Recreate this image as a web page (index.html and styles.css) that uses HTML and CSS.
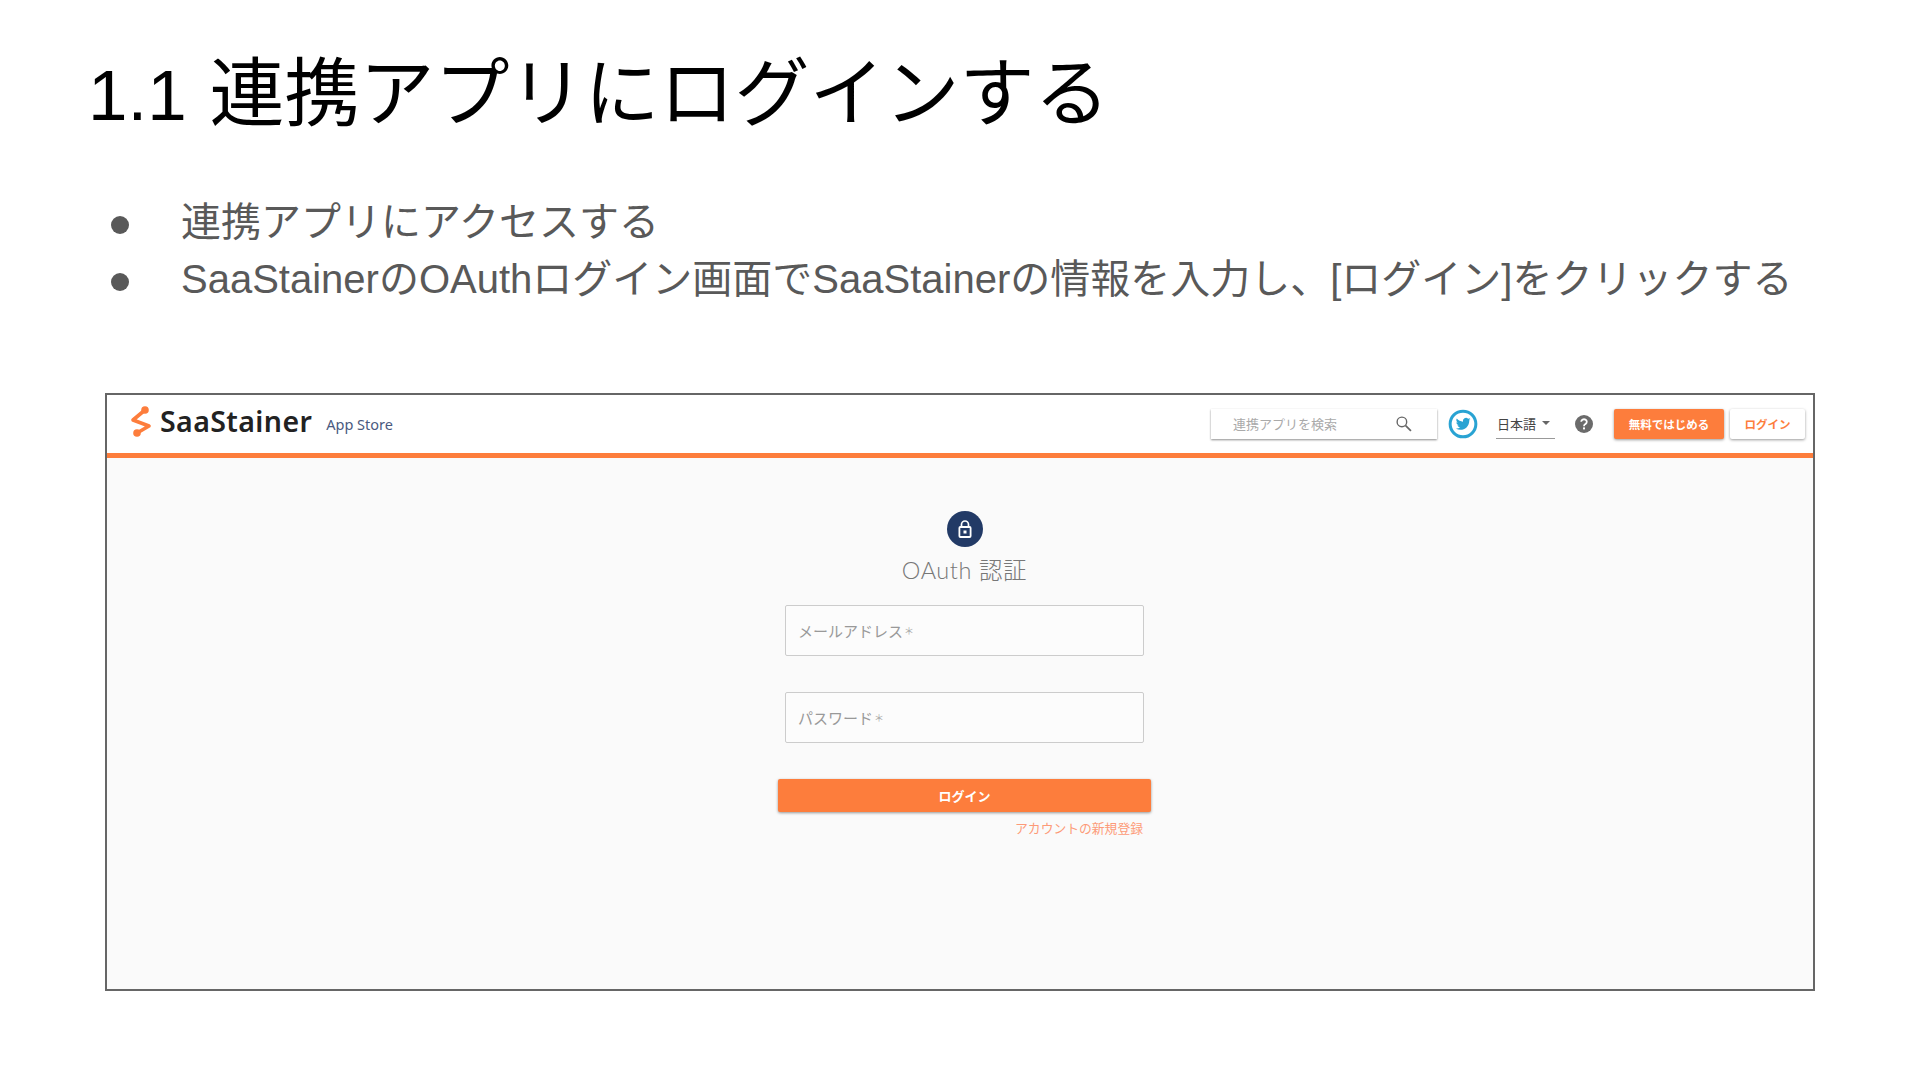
FILE: index.html
```html
<!DOCTYPE html>
<html lang="ja">
<head>
<meta charset="utf-8">
<title>1.1 連携アプリにログインする</title>
<link rel="stylesheet" href="styles.css">
</head>
<body>
<main class="slide">
  <h1 class="slide-title"><span class="num">1.1 </span>連携アプリにログインする</h1>
  <ul class="points">
    <li class="point">連携アプリにアクセスする</li>
    <li class="point">SaaStainerのOAuthログイン画面でSaaStainerの情報を入力し、[ログイン]をクリックする</li>
  </ul>
  <section class="shot">
    <header class="topbar">
      <div class="brand">
        <svg class="brand-mark" viewBox="0 0 22 32" width="22" height="32" aria-hidden="true">
          <path d="M15 4 L3 14 L19 20 L7 27" fill="none" stroke="#fd7d3c" stroke-width="3.6" stroke-linejoin="round" stroke-linecap="round"/>
          <circle cx="15" cy="4" r="3.8" fill="#fd7d3c"/>
          <circle cx="7" cy="27" r="3.8" fill="#fd7d3c"/>
        </svg>
        <span class="brand-name">SaaStainer</span>
        <span class="brand-sub">App Store</span>
      </div>
      <div class="tools">
        <div class="search">
          <span class="search-text">連携アプリを検索</span>
          <svg viewBox="0 0 16 16" width="17" height="17" aria-hidden="true">
            <circle cx="6.500" cy="6.500" r="4.500" fill="none" stroke="#666" stroke-width="1.300"/>
            <path d="M10 10 L15 15" stroke="#666" stroke-width="1.600"/>
          </svg>
        </div>
        <svg class="tw" viewBox="0 0 28 28" width="30" height="30" aria-hidden="true">
          <circle cx="14" cy="14" r="12" fill="#fff" stroke="#29a3d3" stroke-width="2.800"/>
          <path d="M21 9.600c-.5.2-1 .4-1.600.4.6-.3 1-.9 1.200-1.500-.5.3-1.100.6-1.800.7a2.800 2.800 0 0 0-4.800 2.600c-2.300-.1-4.400-1.200-5.800-2.900-.8 1.300-.4 2.900.9 3.800-.5 0-.9-.1-1.300-.4 0 1.400 1 2.500 2.300 2.800-.4.100-.9.100-1.300 0 .4 1.100 1.400 1.900 2.700 2-1.200.9-2.700 1.300-4.200 1.100 4.900 3 12.500.5 12.600-7.700.5-.3 1-.8 1.300-1.300z" fill="#29a3d3"/>
        </svg>
        <div class="lang"><span>日本語</span><i class="caret"></i></div>
        <svg class="help" viewBox="0 0 20 20" width="20" height="20" aria-hidden="true">
          <circle cx="10" cy="10" r="9" fill="#6b6b6b"/>
          <path d="M7.200 7.800a2.800 2.600 0 1 1 4.200 2.300c-1 .6-1.400 1-1.400 2.100" fill="none" stroke="#fff" stroke-width="1.800"/>
          <rect x="9" y="13.400" width="2" height="2" fill="#fff"/>
        </svg>
        <a class="btn btn-start">無料ではじめる</a>
        <a class="btn btn-login">ログイン</a>
      </div>
    </header>
    <div class="stage">
      <div class="auth">
        <div class="lock">
          <svg viewBox="0 0 20 20" width="20" height="20" aria-hidden="true">
            <path d="M6.500 8V5.500a3.500 3.500 0 0 1 7 0V8" fill="none" stroke="#fff" stroke-width="1.700"/>
            <rect x="4.400" y="8" width="11.200" height="10" rx="1" fill="none" stroke="#fff" stroke-width="1.800"/>
            <rect x="8.500" y="11.500" width="3" height="3" fill="#fff"/>
          </svg>
        </div>
        <h2 class="auth-title">OAuth 認証</h2>
        <div class="field">メールアドレス<span class="req">＊</span></div>
        <div class="field field-next">パスワード<span class="req">＊</span></div>
        <a class="submit">ログイン</a>
        <a class="signup">アカウントの新規登録</a>
      </div>
    </div>
  </section>
</main>
</body>
</html>
```
FILE: styles.css
```css
* { box-sizing: border-box; }
html, body { margin: 0; height: 100%; background: #fff; }
body { font-family: "Liberation Sans", "Noto Sans CJK JP", sans-serif; overflow: hidden; }
.slide { width: 1920px; height: 1080px; display: flex; flex-direction: column; padding: 47px 105px 0 0; }
.slide-title { margin: 0 0 0 88px; font-size: 75px; font-weight: 400; line-height: 94px; color: #000; white-space: nowrap; }
.num { font-size: 71px; margin-right: 3px; }
.points { list-style: none; margin: 47px 0 0; padding: 0; }
.point { display: flex; align-items: center; height: 57px; padding-left: 181px; font-size: 40px; color: #595959; white-space: nowrap; position: relative; }
.point::before { content: ""; position: absolute; left: 111px; top: 26px; width: 18px; height: 18px; border-radius: 50%; background: #595959; }
.shot { margin: 89px 0 0 105px; width: 1710px; height: 598px; flex: none; border: 2px solid #666; display: flex; flex-direction: column; background: #fafafa; }
.topbar { height: 63px; flex: none; background: #fff; border-bottom: 5px solid #fd7d3c; display: flex; align-items: center; justify-content: space-between; padding: 0 8px 1px 23px; }
.brand { display: flex; align-items: center; }
.brand-mark { margin-right: 8px; margin-top: -4px; }
.brand-name { font-family: "Noto Sans", sans-serif; font-weight: 600; font-size: 28.500px; color: #222; letter-spacing: .4px; margin-top: -6px; }
.brand-sub { font-family: "Noto Sans", sans-serif; font-size: 14.500px; color: #4a5a80; margin-left: 14px; }
.tools { display: flex; align-items: center; flex: none; }
.tools > * { flex: none; }
.search { width: 226px; height: 30px; background: #fff; box-shadow: 0 1px 2px rgba(0,0,0,.45); display: flex; align-items: center; justify-content: space-between; padding: 0 25px 0 22px; font-size: 13px; color: #aaa; }
.tw { margin-left: 11px; }
.lang { width: 59px; height: 30px; margin-left: 18px; padding-left: 1px; display: flex; align-items: center; gap: 6px; font-size: 13px; color: #444; border-bottom: 1px solid #999; white-space: nowrap; }
.caret { width: 0; height: 0; border: 4px solid transparent; border-top: 4px solid #666; border-bottom: 0; }
.help { margin-left: 19px; }
.btn { height: 30px; display: flex; align-items: center; justify-content: center; border-radius: 2px; font-size: 11.500px; font-weight: 700; box-shadow: 0 1px 3px rgba(0,0,0,.4); white-space: nowrap; }
.btn-start { width: 110px; margin-left: 20px; background: #fd7d3c; color: #fff; }
.btn-login { width: 75px; margin-left: 6px; background: #fff; color: #fd7d3c; }
.stage { flex: 1; display: flex; justify-content: center; }
.auth { width: 373px; margin-left: 9px; display: flex; flex-direction: column; align-items: center; padding-top: 53px; }
.lock { width: 36px; height: 36px; border-radius: 50%; background: #223a66; display: flex; align-items: center; justify-content: center; flex: none; }
.auth-title { margin: 6px 0 0; height: 34px; line-height: 34px; font-family: "Lato", "Noto Sans CJK JP", sans-serif; font-weight: 300; font-size: 23.500px; color: #777; letter-spacing: .6px; }
.field { width: 359px; height: 51px; margin-top: 18px; background: #fcfcfc; border: 1px solid #ccc; border-radius: 2px; display: flex; align-items: center; padding-left: 12px; font-size: 15px; color: #999; }
.field-next { margin-top: 36px; }
.req { font-size: 10px; color: #aaa; margin-left: 1px; }
.submit { width: 373px; height: 33px; margin-top: 36px; display: flex; align-items: center; justify-content: center; background: #fd7d3c; color: #fff; font-size: 13px; font-weight: 700; border-radius: 2px; box-shadow: 0 1px 3px rgba(0,0,0,.4); }
.signup { align-self: flex-end; margin: 8px 8px 0 0; font-size: 12.800px; line-height: 18px; color: #fd9a78; }
```
